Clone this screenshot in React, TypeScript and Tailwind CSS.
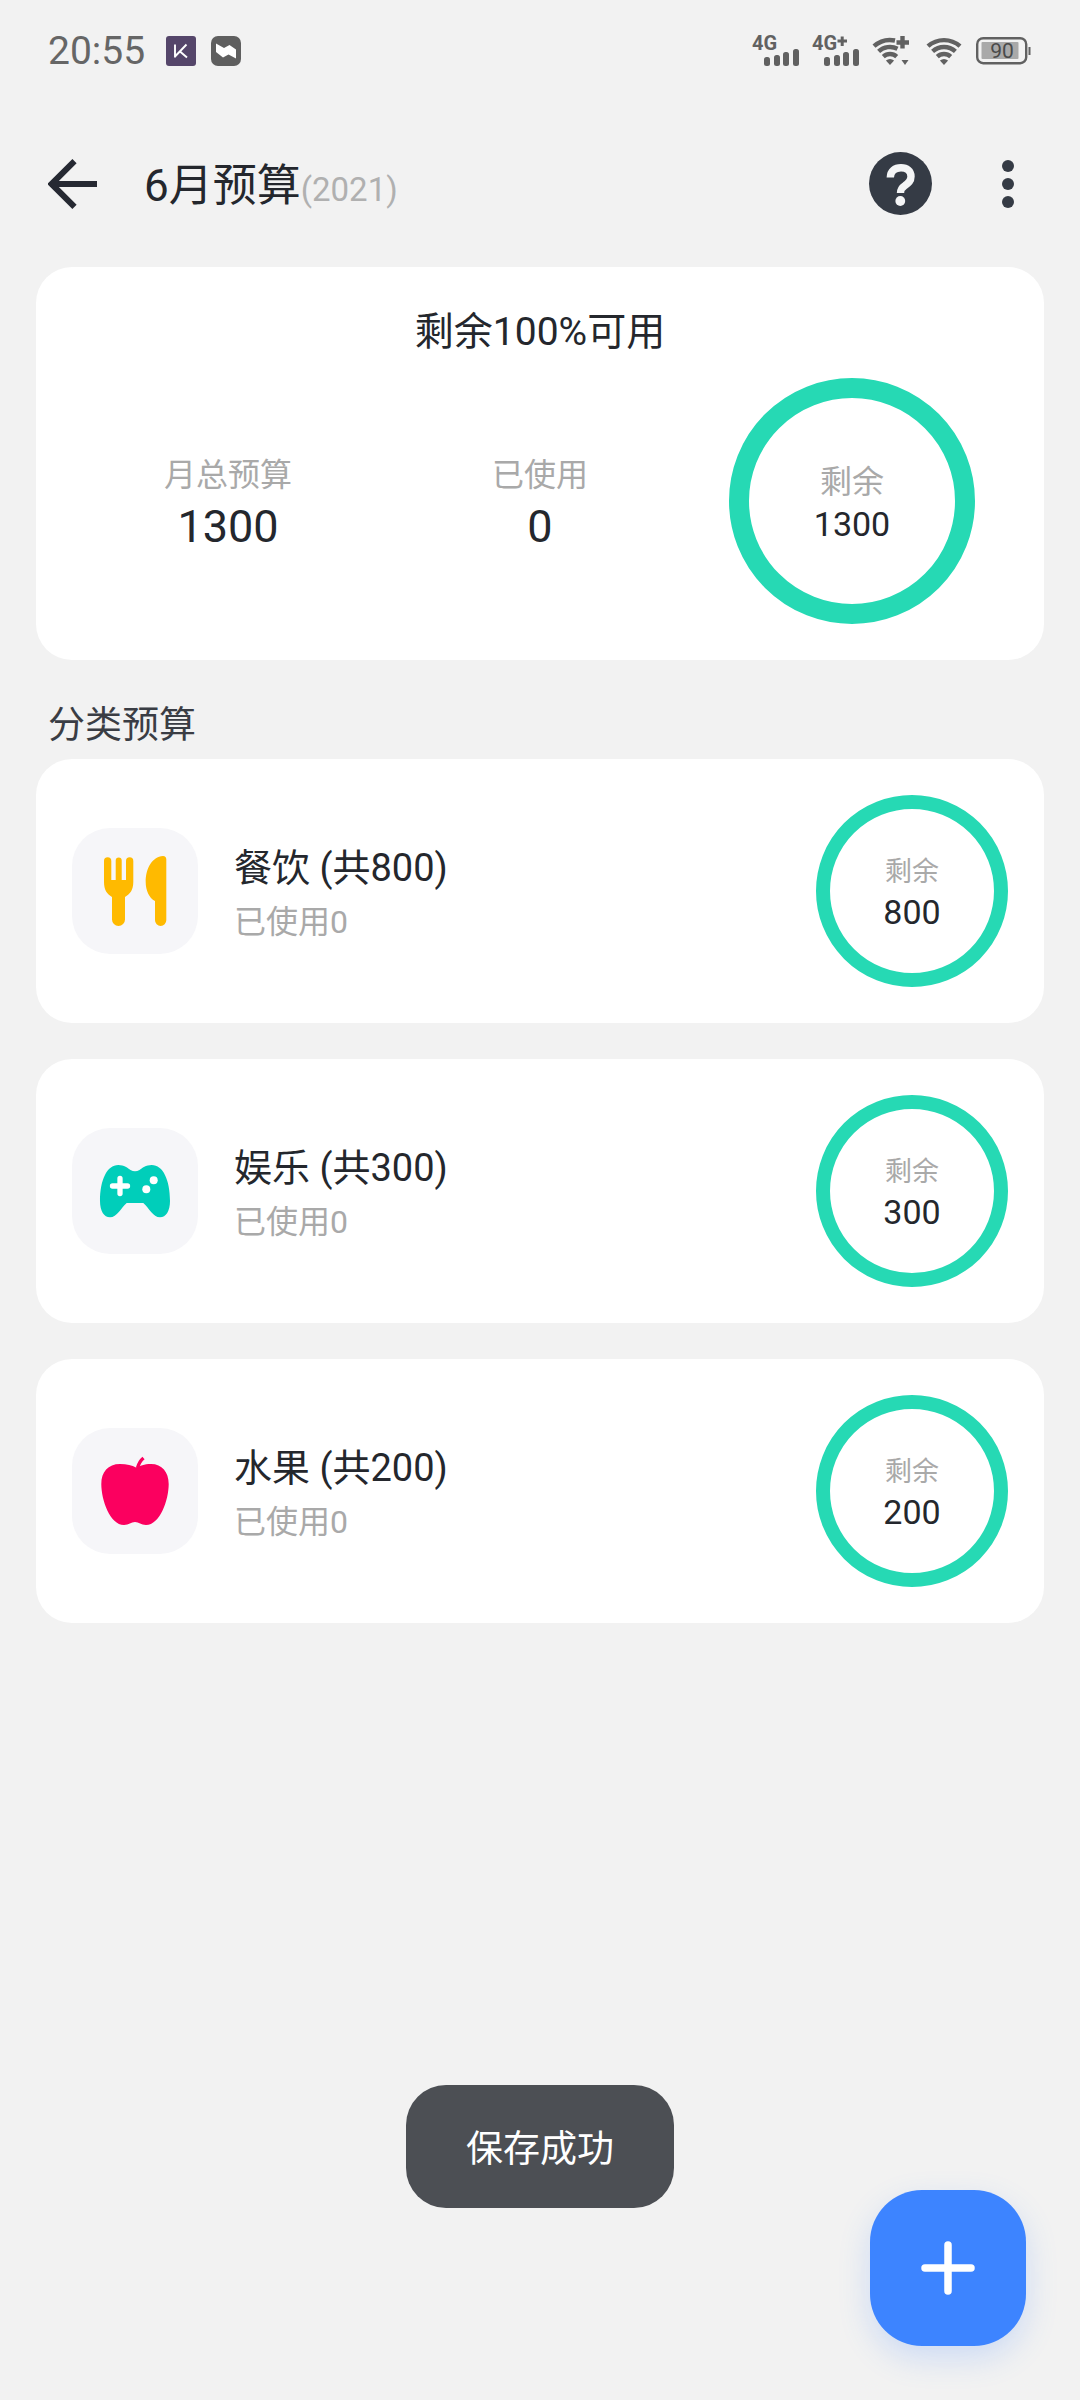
import type { ReactNode } from 'react'

const ForkKnifeIcon = () => (
  <svg viewBox="0 0 126 126" className="size-full" fill="#ffba00" aria-hidden="true">
    <path d="M32 33a3.65 3.65 0 0 1 7.3 0V52h4.4V32.5a3 3 0 0 1 6 0V52H54V33a3.65 3.65 0 0 1 7.3 0v21C61.3 62 58 66 53 69v22.5a6.5 6.5 0 0 1-13 0V69C35 66 32 62 32 54Z" />
    <path d="M94.3 31.5v60.8a5.65 5.65 0 0 1-11.3 0V73C77 70 73.7 62 73.7 54C73.7 40 80 29 91 28q3.3 0 3.3 3.5Z" />
  </svg>
)

const GamepadIcon = () => (
  <svg viewBox="0 0 126 126" className="size-full" fill="#00ceba" aria-hidden="true">
    <path d="M46.3 37C52 37 56 40 58.5 42Q63 44.5 67.5 42C70 40 74 37 79.7 37C91 37 98 52 98 73C98 83 94 89.3 88 89.3C81 89.3 77 80 71.3 75H54.7C49 80 45 89.3 38 89.3C32 89.3 28 83 28 73C28 52 35 37 46.3 37Z" />
    <path d="M40.5 58h15M48 50.5v15" stroke="#fff" strokeWidth="5.3" strokeLinecap="round" />
    <circle cx="81.7" cy="52.3" r="4" fill="#fff" />
    <circle cx="74.3" cy="61.3" r="4" fill="#fff" />
  </svg>
)

const AppleIcon = () => (
  <svg viewBox="0 0 126 126" className="size-full" fill="#fb005f" aria-hidden="true">
    <path d="M64 39.5C60 37.5 55 36 48 36C36 36 29.3 44 29.3 56C29.3 72 38 97 52 97C57 97 59 94 63 94C67 94 69 97 74 97C88 97 96.7 72 96.7 56C96.7 44 90 36 79 36C72 36 68 38 64 39.5Z" />
    <path d="M65.5 40C66.5 36 68.5 32.5 71.5 30" fill="none" stroke="#fb005f" strokeWidth="3.4" />
  </svg>
)

const categories = [
  { name: '餐饮', total: 800, used: 0, icon: <ForkKnifeIcon /> },
  { name: '娱乐', total: 300, used: 0, icon: <GamepadIcon /> },
  { name: '水果', total: 200, used: 0, icon: <AppleIcon /> },
]

const Signal = ({ plus = false }: { plus?: boolean }) => (
  <svg viewBox="0 -6 48 44" className="h-11 w-12" fill="#616161">
    <text x="0" y="15" fontSize="20" fontWeight="700">
      4G
    </text>
    {plus && <path d="M25.5 6h9.5M30.2 1.5v9.5" stroke="#616161" strokeWidth="3" />}
    <rect x="12" y="22" width="6" height="9" rx="2.5" />
    <rect x="22" y="20" width="6" height="11" rx="2.5" />
    <rect x="31" y="17" width="6" height="14" rx="2.5" />
    <rect x="41" y="14" width="6" height="17" rx="2.5" />
  </svg>
)

const Wifi = ({ plus = false }: { plus?: boolean }) => (
  <svg viewBox="0 0 38 30" className="h-[30px] w-[38px]" fill="#616161" aria-hidden="true">
    <g fill="none" stroke="#616161" strokeWidth="4.4">
      <path d={plus ? 'M2 10.2A24 24 0 0 1 23 4.5' : 'M2 10.2A24 24 0 0 1 34 10.2'} />
      <path d={plus ? 'M6.6 15.4A17 17 0 0 1 25.5 12.7' : 'M6.6 15.4A17 17 0 0 1 29.4 15.4'} />
      <path d="M11.3 20.6A10 10 0 0 1 24.7 20.6" />
      {plus && <path d="M24.5 6.5h12.5M30.5 0v12.5" />}
    </g>
    <path d="M13.9 24.6Q18 21.4 22.1 24.6L18 29Z" />
    {plus && <path d="M29.5 24h7L33 29Z" />}
  </svg>
)

const Battery = ({ level }: { level: number }) => (
  <svg viewBox="0 0 56 30" className="h-[30px] w-14">
    <rect x="1.2" y="2.2" width="49" height="25" rx="6" fill="none" stroke="#616161" strokeWidth="2.4" />
    <rect x="5.5" y="6" width="37" height="17" rx="1" fill="#a9a9a9" />
    <rect x="52.5" y="11" width="2" height="8" fill="#616161" />
    <text x="26" y="22" fontSize="21" textAnchor="middle" fill="#4a4a4a">
      {level}
    </text>
  </svg>
)

const StatusBar = () => (
  <div className="flex h-[100px] items-center justify-between pt-0.5 pr-12 pl-12 text-[#666666]">
    <div className="flex items-center">
      <span className="text-[39px] leading-[46px]">20:55</span>
      <svg viewBox="0 0 30 30" className="ml-[21px] size-[30px]" aria-hidden="true">
        <rect width="30" height="30" rx="3" fill="#55466a" />
        <path d="M9 8.5V21.5M20.5 8.5L9 20.5M14 15.5L21 21.5" fill="none" stroke="#fff" strokeWidth="1.9" />
      </svg>
      <svg viewBox="0 0 30 30" className="ml-[15px] size-[30px]" aria-hidden="true">
        <rect width="30" height="30" rx="7" fill="#5f5f5f" />
        <path d="M5 7.5L13 12L18.5 9L25 13.5V22.5L17.5 18.5L12 21.5L5 16Z" fill="#fff" />
      </svg>
    </div>
    <div className="flex items-center gap-3">
      <Signal />
      <Signal plus />
      <Wifi plus />
      <div className="flex items-center gap-3 pl-1">
        <Wifi />
        <Battery level={90} />
      </div>
    </div>
  </div>
)

const Header = () => (
  <header className="flex h-[167px] items-center justify-between pr-[60px] pl-12">
    <div className="flex items-center">
      <button type="button" aria-label="返回">
        <svg viewBox="0 0 50 50" className="size-[50px]" fill="none" stroke="#262932" strokeWidth="6">
          <path d="M26.5 2.2L3.5 25L26.5 47.8M4 25H49" />
        </svg>
      </button>
      <h1 className="ml-[46px] pt-2 text-[44px] leading-[60px]">
        6月预算<span className="text-[33px] text-[#b0b0b0]">(2021)</span>
      </h1>
    </div>
    <div className="flex items-center">
      <button type="button" aria-label="帮助">
        <svg viewBox="0 0 63 63" className="size-[63px]">
          <circle cx="31.5" cy="31.5" r="31.5" fill="#353b45" />
          <path
            d="M21.3 25.5C21.5 18.5 26 15.8 32 15.8C38 15.8 42 19 42 24.5C42 29 39.5 31 36 33.5C33 35.5 31.5 37 31.5 41"
            fill="none"
            stroke="#f4f5f6"
            strokeWidth="7.4"
          />
          <circle cx="31.3" cy="49" r="4.9" fill="#f4f5f6" />
        </svg>
      </button>
      <button type="button" aria-label="更多" className="ml-[64px]">
        <svg viewBox="0 0 24 48" className="h-12 w-6" fill="#353b45">
          <circle cx="12" cy="6" r="6" />
          <circle cx="12" cy="24" r="6" />
          <circle cx="12" cy="42" r="6" />
        </svg>
      </button>
    </div>
  </header>
)

const Stat = ({ label, value }: { label: string; value: number }) => (
  <div className="text-center">
    <div className="text-[32px] leading-[52px] text-[#a9a9a9]">{label}</div>
    <div className="text-[45px] leading-[52px]">{value}</div>
  </div>
)

const SummaryCard = () => (
  <section className="rounded-[36px] bg-white p-9">
    <h2 className="pt-0.5 text-center text-[39px] leading-[54px]">剩余100%可用</h2>
    <div className="mt-[19px] grid grid-cols-3 items-center justify-items-center">
      <Stat label="月总预算" value={1300} />
      <Stat label="已使用" value={0} />
      <div className="flex size-[246px] flex-col items-center justify-center rounded-full border-[20px] border-[#26d9b4] pt-1">
        <div className="text-[32px] leading-[42px] text-[#a9a9a9]">剩余</div>
        <div className="text-[34px] leading-[42px]">1300</div>
      </div>
    </div>
  </section>
)

type CategoryCardProps = {
  name: string
  total: number
  used: number
  icon: ReactNode
}

const CategoryCard = ({ name, total, used, icon }: CategoryCardProps) => (
  <li className="flex items-center rounded-[36px] bg-white p-9">
    <div className="size-[126px] shrink-0 rounded-[38px] bg-[#f6f6f9]">{icon}</div>
    <div className="ml-9 flex-1 pt-2">
      <h3 className="text-[38px] leading-[54px]">
        {name} (共{total})
      </h3>
      <p className="text-[32px] leading-[54px] text-[#a9a9a9]">已使用{used}</p>
    </div>
    <div className="flex size-[192px] flex-col items-center justify-center rounded-full border-[14px] border-[#26d9b4] pt-0.5">
      <div className="text-[27px] leading-10 text-[#a9a9a9]">剩余</div>
      <div className="text-[34px] leading-10">{total - used}</div>
    </div>
  </li>
)

const App = () => {
  return (
    <div className="min-h-screen bg-[#f2f2f2] font-['Roboto','Noto_Sans_CJK_SC',sans-serif] text-[#24272d]">
      <StatusBar />
      <Header />
      <main className="px-9 pb-60">
        <SummaryCard />
        <h2 className="mt-[42px] mb-[9px] pl-3 text-[37px] leading-[48px] text-[#3a3d44]">分类预算</h2>
        <ul className="flex flex-col gap-9">
          {categories.map((category) => (
            <CategoryCard key={category.name} {...category} />
          ))}
        </ul>
      </main>
      <div
        role="status"
        className="fixed bottom-48 left-1/2 -translate-x-1/2 rounded-[40px] bg-[#4c4f54] px-[60px] pt-[38px] pb-8 text-[37px] leading-[53px] whitespace-nowrap text-white"
      >
        保存成功
      </div>
      <button
        type="button"
        aria-label="添加"
        className="fixed right-[54px] bottom-[54px] flex size-[156px] items-center justify-center rounded-[52px] bg-[#3d84ff] shadow-[0_12px_32px_rgba(61,132,255,0.2)]"
      >
        <svg viewBox="0 0 54 54" className="size-[54px]" stroke="#fff" strokeWidth="7.5" strokeLinecap="round">
          <path d="M4 27H50M27 4V50" />
        </svg>
      </button>
    </div>
  )
}

export default App
